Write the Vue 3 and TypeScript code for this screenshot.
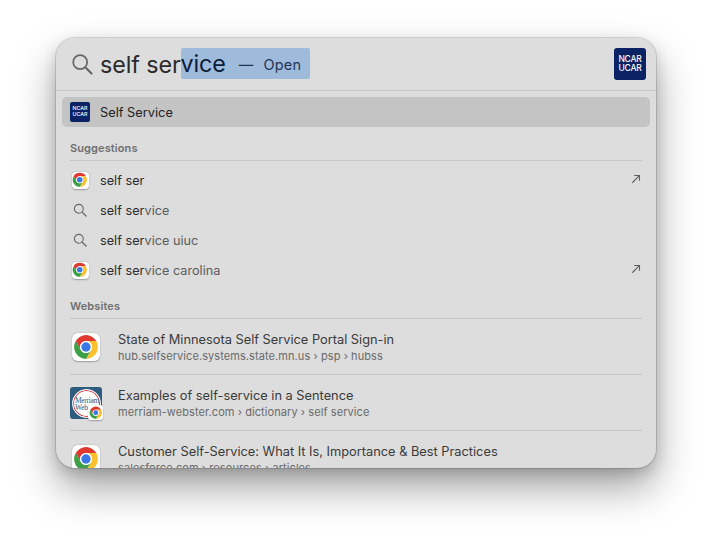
<script setup lang="ts">
interface Suggestion {
  icon: "chrome" | "search";
  typed: string;
  rest: string;
  external?: boolean;
}

interface Website {
  title: string;
  url: string;
  icon: "chrome" | "merriam";
}

const suggestions: Suggestion[] = [
  { icon: "chrome", typed: "self ser", rest: "", external: true },
  { icon: "search", typed: "self ser", rest: "vice" },
  { icon: "search", typed: "self ser", rest: "vice uiuc" },
  { icon: "chrome", typed: "self ser", rest: "vice carolina", external: true },
];

const websites: Website[] = [
  {
    title: "State of Minnesota Self Service Portal Sign-in",
    url: "hub.selfservice.systems.state.mn.us › psp › hubss",
    icon: "chrome",
  },
  {
    title: "Examples of self-service in a Sentence",
    url: "merriam-webster.com › dictionary › self service",
    icon: "merriam",
  },
  {
    title: "Customer Self-Service: What It Is, Importance & Best Practices",
    url: "salesforce.com › resources › articles",
    icon: "chrome",
  },
];
</script>

<template>
  <div class="page">
    <svg class="defs" width="0" height="0" aria-hidden="true">
      <symbol id="chrome" viewBox="0 0 48 48">
        <path fill="#e0392f" d="M4.95 13A22 22 0 0 1 43.05 13H24A11 11 0 0 0 14.47 29.5Z" />
        <path fill="#fbc02d" d="M43.05 13A22 22 0 0 1 24 46L33.53 29.5A11 11 0 0 0 24 13Z" />
        <path fill="#3da047" d="M24 46A22 22 0 0 1 4.95 13L14.47 29.5A11 11 0 0 0 33.53 29.5Z" />
        <circle cx="24" cy="24" r="11" fill="#fff" />
        <circle cx="24" cy="24" r="8.6" fill="#3b78e7" />
      </symbol>
      <symbol id="search" viewBox="0 0 24 24">
        <circle cx="10" cy="10" r="7.6" fill="none" stroke="currentColor" stroke-width="1.9" />
        <path d="M15.6 15.6L22.4 22.4" fill="none" stroke="currentColor" stroke-width="2.3" stroke-linecap="round" />
      </symbol>
    </svg>

    <div class="panel">
      <header class="search-bar">
        <svg class="search-glass"><use href="#search" /></svg>
        <div class="query">
          <span>self ser</span><span class="selection"><span>vice</span><span class="hint"><i>—</i>Open</span></span>
        </div>
        <div class="ncar large">NCAR<br />UCAR</div>
      </header>

      <div class="top-hit">
        <div class="ncar small">NCAR<br />UCAR</div>
        <span>Self Service</span>
      </div>

      <section class="group suggestions">
        <h2>Suggestions</h2>
        <ul>
          <li v-for="item in suggestions" :key="item.typed + item.rest" class="suggestion">
            <span v-if="item.icon === 'chrome'" class="tile small-tile">
              <svg><use href="#chrome" /></svg>
            </span>
            <svg v-else class="row-glass"><use href="#search" /></svg>
            <span class="label">{{ item.typed }}<span class="rest">{{ item.rest }}</span></span>
            <svg v-if="item.external" class="arrow" viewBox="0 0 12 12">
              <path d="M1.5 10.5L10 2M3.8 1.8H10.2V8.2" fill="none" stroke="currentColor" stroke-width="1.3" />
            </svg>
          </li>
        </ul>
      </section>

      <section class="group websites">
        <h2>Websites</h2>
        <ul>
          <li v-for="site in websites" :key="site.url" class="website">
            <div v-if="site.icon === 'merriam'" class="merriam">
              <div class="seal">Merriam-<br />Web</div>
              <span class="tile badge">
                <svg><use href="#chrome" /></svg>
              </span>
            </div>
            <span v-else class="tile large-tile">
              <svg><use href="#chrome" /></svg>
            </span>
            <div class="site-text">
              <div class="site-title">{{ site.title }}</div>
              <div class="site-url">{{ site.url }}</div>
            </div>
          </li>
        </ul>
      </section>
    </div>
  </div>
</template>

<style>
html,
body {
  margin: 0;
  background: #fff;
}
</style>

<style scoped>
.page {
  box-sizing: border-box;
  width: 712px;
  height: 542px;
  padding: 38px 56px 74px;
  overflow: hidden;
  background: #fff;
  font-family: Inter, "Liberation Sans", sans-serif;
}

.defs {
  position: absolute;
}

.panel {
  box-sizing: border-box;
  height: 430px;
  overflow: hidden;
  border-radius: 19px;
  background: #dddddd;
  box-shadow:
    0 0 0 1px rgba(0, 0, 0, 0.12),
    0 20px 40px rgba(0, 0, 0, 0.36),
    0 5px 14px rgba(0, 0, 0, 0.16);
}

.search-bar {
  display: flex;
  align-items: center;
  height: 52px;
  padding: 0 10px 0 15px;
  border-bottom: 1px solid #c8c8c8;
}

.search-glass {
  width: 22px;
  height: 22px;
  margin-right: 7px;
  color: #666;
}

.query {
  display: flex;
  flex: 1;
  align-items: center;
  height: 31px;
  font-size: 23.3px;
  letter-spacing: -0.1px;
  color: #2b2b2b;
}

.selection {
  display: flex;
  align-items: center;
  width: 129px;
  height: 31px;
  margin-top: -1px;
  border-radius: 2px;
  background: #9fbbdc;
  color: #0c1d38;
}

.hint {
  margin: 1px 0 0 13px;
  font-size: 14.5px;
  letter-spacing: 0.2px;
  color: #1f3454;
}

.hint i {
  margin-right: 10px;
  font-style: normal;
}

.ncar {
  flex: none;
  display: flex;
  align-items: center;
  justify-content: center;
  text-align: center;
  background: #0b2265;
  color: #fff;
  font-weight: 500;
}

.ncar.large {
  width: 32px;
  height: 32px;
  border-radius: 3px;
  font-size: 8.5px;
  line-height: 9px;
  letter-spacing: -0.2px;
}

.ncar.small {
  width: 20px;
  height: 20px;
  border-radius: 2px;
  font-size: 5.3px;
  line-height: 5.6px;
}

.top-hit {
  display: flex;
  align-items: center;
  gap: 10px;
  height: 30px;
  margin: 6px 6px 0;
  padding-left: 8px;
  border-radius: 5px;
  background: #c4c4c4;
  font-size: 12.8px;
  color: #222;
}

.group {
  margin: 0 14px;
}

.group h2 {
  box-sizing: border-box;
  height: 20px;
  margin: 0;
  border-bottom: 1px solid #c8c8c8;
  font-size: 11px;
  font-weight: 600;
  line-height: 14px;
  letter-spacing: 0.1px;
  color: #6f6f6f;
}

.group ul {
  margin: 0;
  padding: 0;
  list-style: none;
}

.suggestions {
  margin-top: 14px;
}

.suggestions ul {
  padding-top: 4px;
}

.websites {
  margin-top: 14px;
}

.suggestion {
  display: flex;
  align-items: center;
  height: 30px;
  font-size: 12.7px;
  color: #2c2c2c;
}

.label {
  flex: 1;
}

.rest {
  color: #5c5c5c;
}

.tile {
  display: flex;
  flex: none;
  align-items: center;
  justify-content: center;
  background: #fff;
  box-shadow: 0 0.5px 1.5px rgba(0, 0, 0, 0.3);
}

.small-tile {
  width: 17px;
  height: 17px;
  margin: 0 11.5px 0 1.5px;
  border-radius: 4px;
}

.small-tile svg {
  width: 15.5px;
  height: 15.5px;
}

.row-glass {
  flex: none;
  width: 14px;
  height: 14px;
  margin: 0 13px 0 3px;
  color: #666;
}

.arrow {
  width: 10px;
  height: 10px;
  margin-right: 1px;
  margin-bottom: 2px;
  color: #5f5f5f;
}

.website {
  display: flex;
  align-items: center;
  height: 55px;
  border-bottom: 1px solid #c8c8c8;
}

.website:last-child {
  border-bottom: none;
}

.large-tile {
  width: 28px;
  height: 28px;
  margin: 1px 18px 0 2px;
  border-radius: 6px;
}

.large-tile svg {
  width: 26px;
  height: 26px;
}

.merriam {
  position: relative;
  flex: none;
  display: flex;
  align-items: center;
  justify-content: center;
  width: 32px;
  height: 32px;
  margin: 1px 16px 0 0;
  border-radius: 3px;
  background: #2d5c7f;
}

.seal {
  box-sizing: border-box;
  width: 29px;
  height: 29px;
  padding: 7px 0 0 2.5px;
  overflow: hidden;
  border: 1px solid #fff;
  border-radius: 50%;
  background: #fff;
  box-shadow: inset 0 0 0 1px #cf3a3e;
  font-family: "Liberation Serif", serif;
  font-size: 7.5px;
  line-height: 7.5px;
  letter-spacing: -0.3px;
  white-space: nowrap;
  color: #2d5c7f;
}

.badge {
  position: absolute;
  right: -1px;
  bottom: -1px;
  width: 15px;
  height: 15px;
  border-radius: 3px;
}

.badge svg {
  width: 13.5px;
  height: 13.5px;
}

.site-text {
  min-width: 0;
}

.site-title {
  font-size: 12.8px;
  line-height: 17px;
  color: #3a3a3a;
}

.site-url {
  margin-top: 1px;
  font-size: 11px;
  line-height: 14px;
  letter-spacing: 0.08px;
  color: #6a6a6a;
}
</style>
